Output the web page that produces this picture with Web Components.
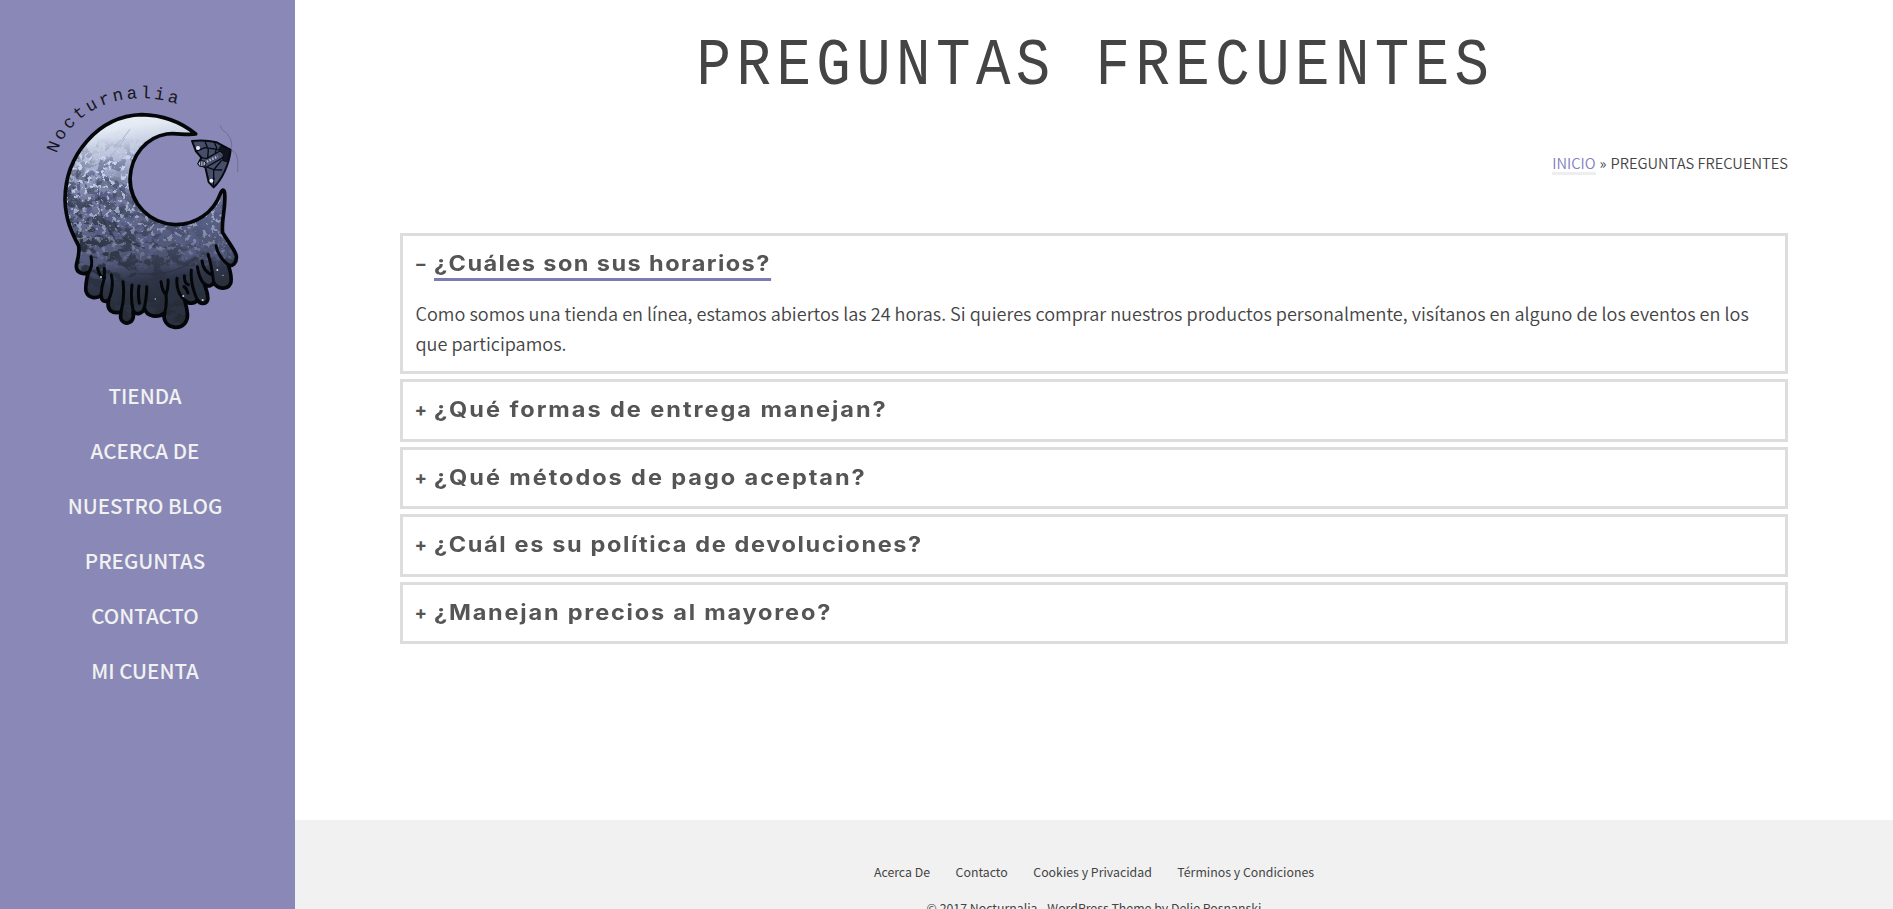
<!DOCTYPE html>
<html lang="es">
<head>
<meta charset="utf-8">
<title>Preguntas Frecuentes</title>
<style>
html,body{margin:0;height:100%;overflow:hidden;background:#fff}
body{font-family:"Noto Sans CJK SC","Source Sans Pro",sans-serif;color:#444}
</style>
</head>
<body>
<shop-page></shop-page>
<script>
const define=(name,html)=>customElements.define(name,class extends HTMLElement{
  constructor(){super();this.attachShadow({mode:'open'}).innerHTML=html;}
});

define('moon-logo',`
<style>:host{display:block;width:220px;height:270px}svg{display:block;width:100%;height:100%}
text{font:52px "Liberation Mono",monospace;fill:#17171f}</style>
<svg viewBox="0 0 660 810">
<defs>
<linearGradient id="g" x1="0" y1="0" x2="0.12" y2="1">
<stop offset="0" stop-color="#eef3f8"/><stop offset=".1" stop-color="#e3eaf3"/><stop offset=".27" stop-color="#a9b1d0"/><stop offset=".4" stop-color="#757ca0"/><stop offset=".58" stop-color="#5b6284"/><stop offset=".72" stop-color="#4d5472"/><stop offset=".82" stop-color="#30364a"/><stop offset=".88" stop-color="#2a303c"/><stop offset="1" stop-color="#262b35"/>
</linearGradient>
<filter id="light" x="0" y="0" width="1" height="1" color-interpolation-filters="sRGB"><feTurbulence type="fractalNoise" baseFrequency=".07" numOctaves="5" seed="8"/><feColorMatrix values="0 0 0 0 .8 0 0 0 0 .84 0 0 0 0 .94 12 0 0 0 -6.9"/></filter>
<filter id="dark" x="0" y="0" width="1" height="1" color-interpolation-filters="sRGB"><feTurbulence type="fractalNoise" baseFrequency=".022 .034" numOctaves="5" seed="21"/><feColorMatrix values="0 0 0 0 .17 0 0 0 0 .2 0 0 0 0 .26 14 0 0 0 -6.8"/></filter>
<filter id="mid" x="0" y="0" width="1" height="1" color-interpolation-filters="sRGB"><feTurbulence type="fractalNoise" baseFrequency=".04 .03" numOctaves="5" seed="5"/><feColorMatrix values="0 0 0 0 .34 0 0 0 0 .37 0 0 0 0 .52 14 0 0 0 -7"/></filter>
<linearGradient id="ml" x1="0" y1="0" x2="0" y2="1"><stop offset=".2" stop-color="#000"/><stop offset=".34" stop-color="#fff"/><stop offset=".5" stop-color="#aaa"/><stop offset=".64" stop-color="#555"/><stop offset=".74" stop-color="#000"/></linearGradient>
<linearGradient id="md" gradientUnits="userSpaceOnUse" x1="420" y1="380" x2="260" y2="610"><stop offset="0" stop-color="#000"/><stop offset=".5" stop-color="#888"/><stop offset="1" stop-color="#fff"/></linearGradient>
<linearGradient id="mm" x1="0" y1="0" x2="0" y2="1"><stop offset=".25" stop-color="#000"/><stop offset=".45" stop-color="#fff"/><stop offset=".65" stop-color="#fff"/><stop offset=".75" stop-color="#000"/></linearGradient>
<mask id="a"><rect width="660" height="810" fill="url(#ml)"/></mask>
<mask id="b"><rect width="660" height="810" fill="url(#md)"/></mask>
<mask id="d"><rect width="660" height="810" fill="url(#mm)"/></mask>
<path id="moon" d="M497 192C455 158 400 135 335 134C205 138 105 255 105 390C107 450 124 485 146 528C150 560 139 571 139 590C140 610 158 614 174 608C170 632 165 646 168 664C175 687 200 686 213 676C214 696 228 697 236 690C228 721 248 733 273 726C271 741 270 748 279 755C291 765 308 756 310 740C309 733 309 729 310 724C321 738 340 729 343 714C350 741 384 745 404 729C397 750 411 770 435 772C460 773 475 754 472 730C471 713 466 700 464 691C475 702 494 703 502 690C510 703 528 705 533 690C536 672 527 655 523 642C534 652 546 648 551 638C564 659 593 660 602 640C607 622 601 604 595 585C608 591 621 578 619 558C615 539 596 519 578 488C573 455 588 410 584 370C582 355 576 359 572 369C550 430 495 465 435 464C360 460 300 403 300 325C304 253 350 202 410 192C440 188 470 197 497 192Z"/>
<clipPath id="c"><use href="#moon"/></clipPath>
<path id="arc" d="M80 251C112 150 212 89 318 85Q385 82 458 107"/>
</defs>
<text><textPath href="#arc" textLength="434">Nocturnalia</textPath></text>
<use href="#moon" fill="url(#g)"/>
<g clip-path="url(#c)">
<g mask="url(#d)"><rect width="660" height="810" filter="url(#mid)"/></g>
<g mask="url(#b)"><rect width="660" height="810" filter="url(#dark)"/></g>
<g mask="url(#a)"><rect width="660" height="810" filter="url(#light)"/></g>
<path d="M207 350Q198 440 255 505M250 450Q270 515 345 535M320 610Q440 622 500 560" fill="none" stroke="#2c3142" stroke-width="4" opacity=".6"/>
<path d="M250 232Q278 212 300 178M232 268Q262 240 285 205" fill="none" stroke="#aab2d2" stroke-width="3"/>
</g>
<use href="#moon" fill="none" stroke="#05060a" stroke-width="11" stroke-linejoin="round"/>
<g fill="none" stroke="#05060a" stroke-width="9" stroke-linecap="round">
<path d="M183 560Q190 592 174 608M203 594Q207 620 223 624Q214 650 213 676M223 595V624M244 615Q253 650 236 690M279 635Q285 685 273 726M306 645Q301 690 310 724M327 648Q323 673 328 700M350 650Q351 675 343 714M393 635Q397 665 408 674Q416 650 414 630M408 674Q411 705 404 729M441 625Q437 665 464 691M463 617Q463 640 475 644M484 600Q480 640 502 690M502 590Q507 625 523 642M516 573Q520 605 547 615M534 553Q544 580 551 638M558 527Q564 560 595 585M462 650Q469 654 474 669"/>
</g>
<g fill="#c8d0e4"><circle cx="213" cy="621" r="3"/><circle cx="460" cy="678" r="3"/><circle cx="518" cy="690" r="3"/><circle cx="579" cy="616" r="2"/><circle cx="376" cy="687" r="2"/><circle cx="562" cy="600" r="3"/></g>
<g stroke="#080a12" stroke-linejoin="round" stroke-linecap="round">
<path d="M486 213Q524 208 560 217L602 240C597 285 576 329 551 352L536 336L526 292L505 281L514 263L498 244Z" fill="#464e6a" stroke-width="6"/>
<path d="M498 244L525 233L575 240L529 266L514 263M525 214L535 240L533 264M553 217L560 233L556 248M580 262L530 291L551 299L575 300M574 272L551 300L551 350M536 336L553 325" fill="none" stroke-width="4"/>
<path d="M573 228L602 239L592 275L578 272L580 252L566 240Z" fill="#10131d" stroke-width="3"/>
</g>
<path d="M522 279L564 259" stroke="#aab3cc" stroke-width="7" stroke-dasharray="5 4"/><ellipse cx="516" cy="281" rx="12" ry="9" fill="#aab3cc" stroke="#080a12" stroke-width="3"/>
<path d="M512 274V289M519 273V288" stroke="#222838" stroke-width="3"/>
<circle cx="504" cy="234" r="6" fill="#e9edf8"/><circle cx="544" cy="332" r="6" fill="#e9edf8"/>
<path d="M602 237C611 220 599 193 579 181Q572 173 571 166M603 240C625 248 624 270 623 306" fill="none" stroke="#656277" stroke-width="2"/>
</svg>`);

define('nav-item',`<style>:host{display:block;height:55px;line-height:55px;text-align:center;font-size:20.5px;font-weight:500;color:#f1f1f1}</style><slot></slot>`);

define('side-bar',`<style>
:host{display:flex;flex-direction:column;width:290px;padding:70px 5px 0 0;background:#8988b6;flex:none}
moon-logo{margin-left:30px}nav{margin-top:28px}</style>
<moon-logo></moon-logo>
<nav><nav-item>TIENDA</nav-item><nav-item>ACERCA DE</nav-item><nav-item>NUESTRO BLOG</nav-item><nav-item>PREGUNTAS</nav-item><nav-item>CONTACTO</nav-item><nav-item>MI CUENTA</nav-item></nav>`);

define('page-title',`<style>:host{display:flex;justify-content:center;height:124px}
h1{margin:0 0 0 3px;font:400 66px/134px "Liberation Mono",monospace;letter-spacing:6.25px;color:#444;white-space:pre;transform:scaleX(.87)}</style><h1><slot></slot></h1>`);

define('bread-crumbs',`<style>:host{display:flex;justify-content:flex-end;gap:4px;height:31px;font-size:14.7px;line-height:31px;font-weight:350}
a{color:#8280bd;height:25px;border-bottom:3px solid #eee}</style><a>INICIO</a><span>»</span><span>PREGUNTAS FRECUENTES</span>`);

customElements.define('faq-item',class extends HTMLElement{
  constructor(){
    super();
    const open=this.hasAttribute('open');
    this.attachShadow({mode:'open'}).innerHTML=`<style>
:host{display:block;box-sizing:border-box;border:3px solid #ddd;height:62.5px;padding:0 12.5px}
:host([open]){height:141px}
h3{display:flex;margin:0;height:45px;font:700 21px/55px Inter,sans-serif;color:#555;letter-spacing:var(--ls,1.5px)}
i{font-style:normal;width:18px;flex:none;font-size:18.5px;letter-spacing:0;text-indent:-1px}
span{height:45px;transform:scaleX(1.12);transform-origin:0 0;white-space:nowrap;box-sizing:border-box}
:host([open]) span{border-bottom:3px solid #7c7bb4}
p{margin:17px 0 0;font-size:18.08px;line-height:30px;font-weight:350}
</style><h3><i>${open?'−':'+'}</i><span>${this.getAttribute('question')}</span></h3>${open?'<p><slot></slot></p>':''}`;
  }
});

define('page-footer',`<style>:host{display:block;background:#f1f1f1;height:89px;overflow:hidden;font-size:12.33px;text-align:center}
nav{display:flex;justify-content:center;gap:25.5px;padding-top:42px;line-height:20px}
p{margin:16px 0 0;line-height:20px;white-space:pre}</style>
<nav><a>Acerca De</a><a>Contacto</a><a>Cookies y Privacidad</a><a>Términos y Condiciones</a></nav><p>© 2017 Nocturnalia - WordPress Theme by Delie Posnanski</p>`);

define('shop-page',`<style>
:host{display:flex;height:909px}
main{flex:1;display:flex;flex-direction:column}
section{padding:0 105px;flex:1}
bread-crumbs{margin-top:23px}
.faq{display:flex;flex-direction:column;gap:5px;margin-top:55px}
</style>
<side-bar></side-bar>
<main><section>
<page-title>PREGUNTAS FRECUENTES</page-title>
<bread-crumbs></bread-crumbs>
<div class="faq">
<faq-item open style="--ls:1.27px" question="¿Cuáles son sus horarios?">Como somos una tienda en línea, estamos abiertos las 24 horas. Si quieres comprar nuestros productos personalmente, visítanos en alguno de los eventos en los que participamos.</faq-item>
<faq-item style="--ls:1.75px" question="¿Qué formas de entrega manejan?"></faq-item>
<faq-item style="--ls:1.73px" question="¿Qué métodos de pago aceptan?"></faq-item>
<faq-item style="--ls:1.45px" question="¿Cuál es su política de devoluciones?"></faq-item>
<faq-item style="--ls:1.6px" question="¿Manejan precios al mayoreo?"></faq-item>
</div></section>
<page-footer></page-footer></main>`);
</script>
</body>
</html>
